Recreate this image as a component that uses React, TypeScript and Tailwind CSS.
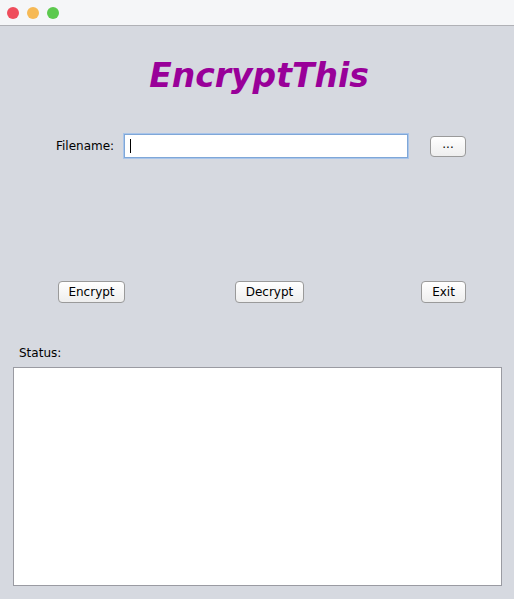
export default function App() {
  return (
    <div
      className="w-[514px] h-[599px] flex flex-col bg-[#d6d9e0] text-[13px] text-black overflow-hidden"
      style={{ fontFamily: '"DejaVu Sans", "Liberation Sans", sans-serif' }}
    >
      {/* title bar */}
      <div className="h-[26px] shrink-0 flex items-center gap-[8px] pl-[7px] bg-[#f5f6f8] border-b border-[#b0b1b6]">
        <span className="w-[12px] h-[12px] rounded-full bg-[#ef4d5c]" />
        <span className="w-[12px] h-[12px] rounded-full bg-[#f6b955]" />
        <span className="w-[12px] h-[12px] rounded-full bg-[#5cc94e]" />
      </div>

      <h1 className="mt-[28px] h-[44px] text-center text-[33px] leading-[44px] font-bold italic text-[#990099] pl-[4px]">
        EncryptThis
      </h1>

      <div className="mt-[36px] flex items-center h-[24px]">
        <span className="ml-[56px] w-[68px] text-[12px]">Filename:</span>
        <div className="w-[284px] h-[24px] bg-white border border-[#7fa7d8] shadow-[0_0_0_1px_#a9c5ea] flex items-center px-[5px]">
          <span className="w-px h-[14px] bg-black" />
        </div>
        <button className="ml-[22px] w-[36px] h-[21px] rounded-[4px] bg-gradient-to-b from-white to-[#eeeeee] border border-[#9a9a9a] text-[12px] leading-none pb-[4px]">
          ...
        </button>
      </div>

      <div className="mt-[123px] flex items-center h-[22px]">
        <button className="ml-[58px] w-[67px] h-[22px] rounded-[4px] bg-gradient-to-b from-white to-[#eeeeee] border border-[#9a9a9a] text-[12px]">
          Encrypt
        </button>
        <button className="ml-[110px] w-[69px] h-[22px] rounded-[4px] bg-gradient-to-b from-white to-[#eeeeee] border border-[#9a9a9a] text-[12px]">
          Decrypt
        </button>
        <button className="ml-[117px] w-[45px] h-[22px] rounded-[4px] bg-gradient-to-b from-white to-[#eeeeee] border border-[#9a9a9a] text-[12px]">
          Exit
        </button>
      </div>

      <div className="mt-[42px] ml-[19px] text-[12px] h-[16px] leading-[16px]">Status:</div>

      <div className="mt-[6px] mx-[13px] w-[489px] h-[219px] bg-white border border-[#9a9ba2]" />
    </div>
  );
}
